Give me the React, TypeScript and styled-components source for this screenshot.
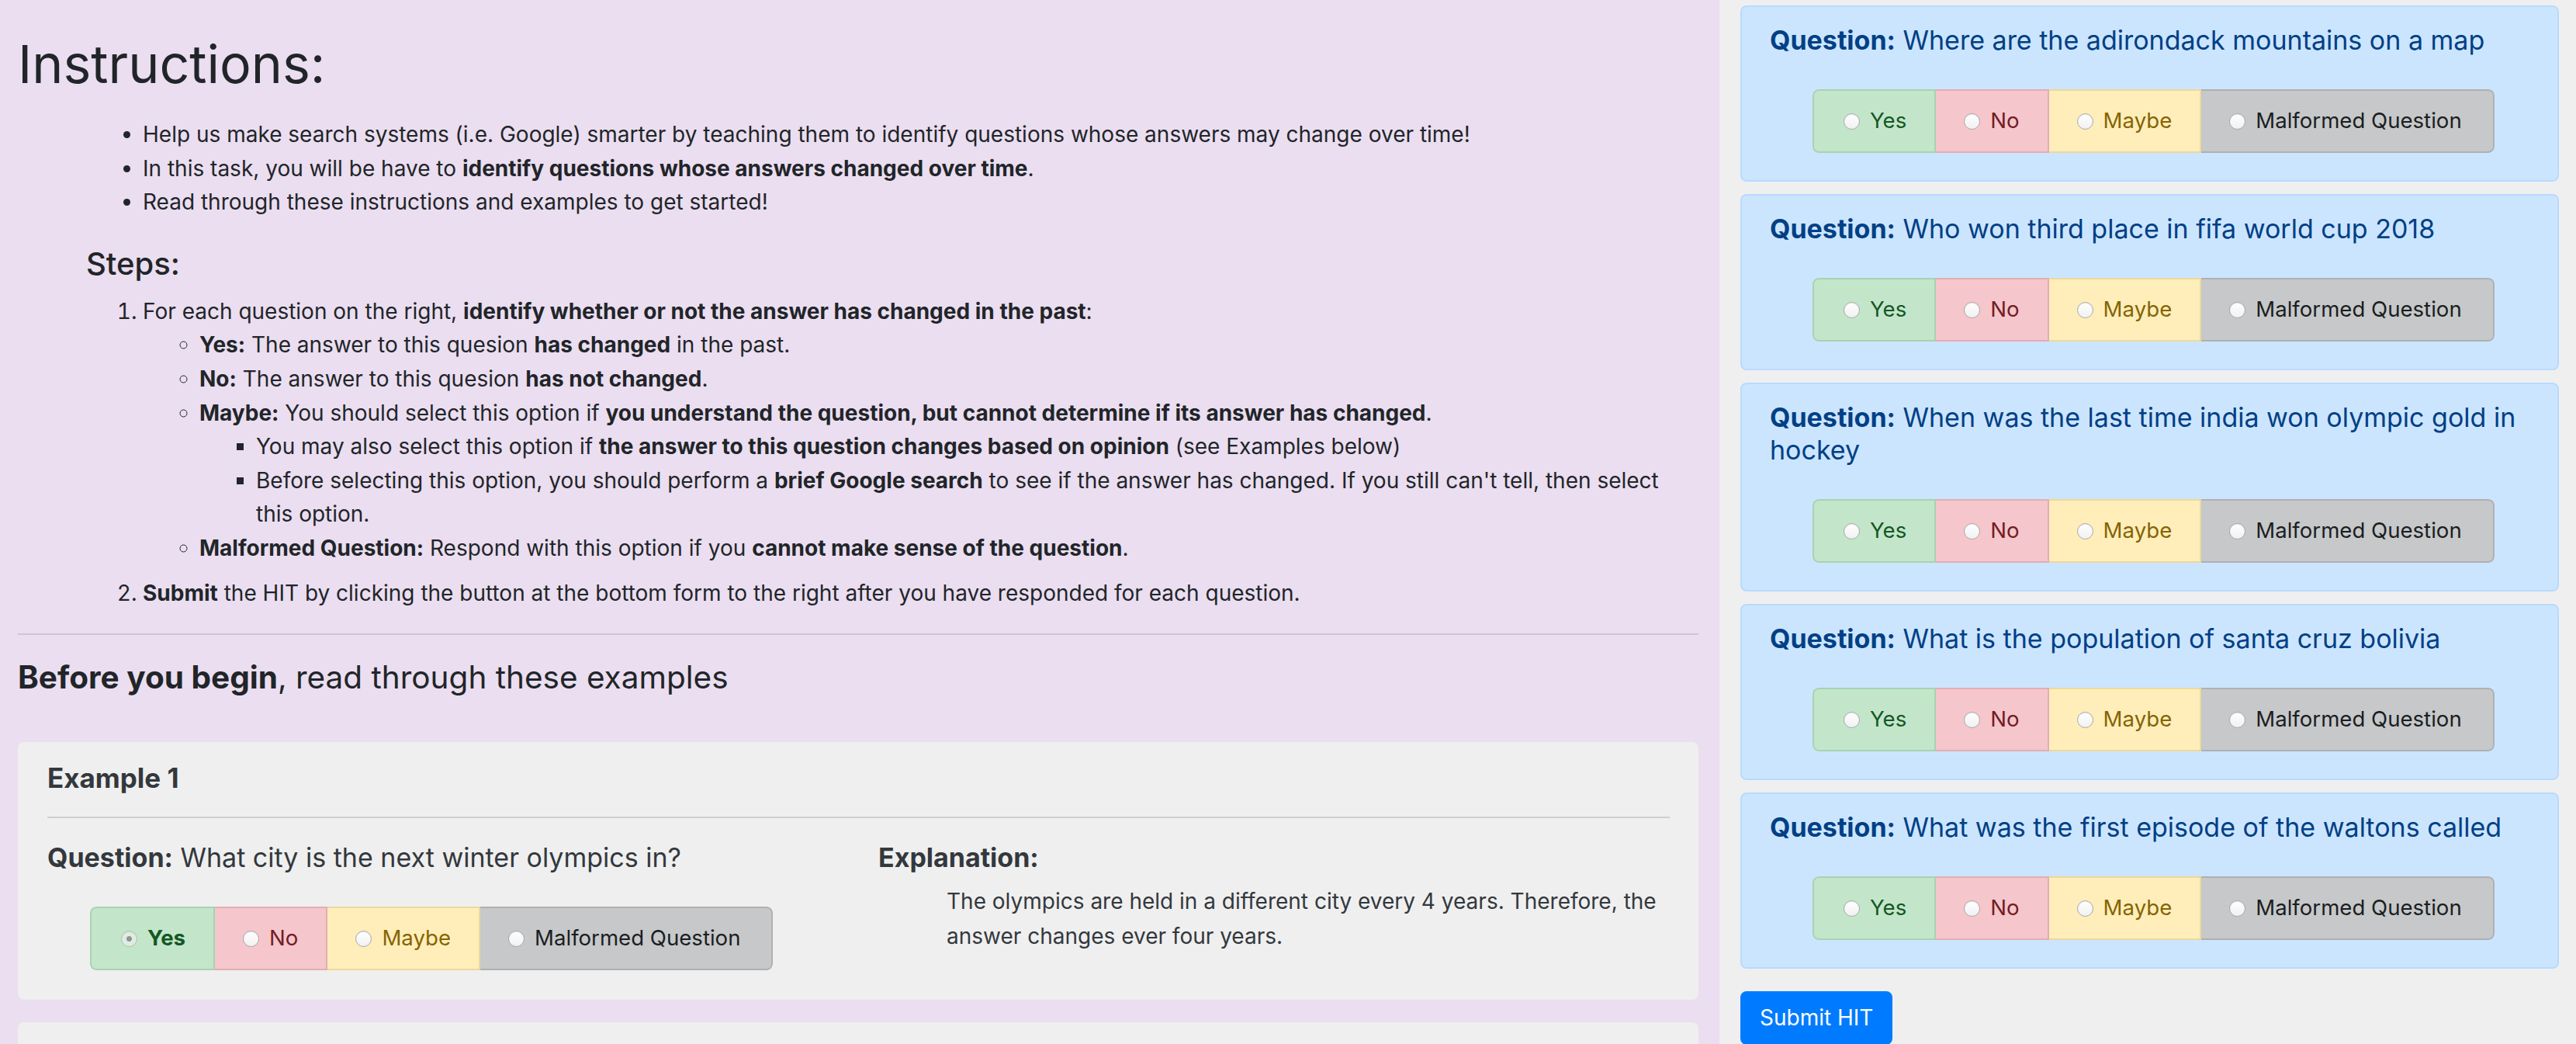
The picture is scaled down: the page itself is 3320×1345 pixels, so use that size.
import React from 'react';
import styled, { createGlobalStyle } from 'styled-components';

const GlobalStyle = createGlobalStyle`
  html, body {
    margin: 0;
    padding: 0;
  }
  body {
    font-family: Inter, "Noto Sans", "Liberation Sans", sans-serif;
    font-size: 28px;
    line-height: 43.6px;
    color: #212529;
    background-color: #efefef;
  }
  * {
    box-sizing: border-box;
  }
`;

const Page = styled.div`
  display: grid;
  grid-template-columns: 2216px 1fr;
  min-height: 100vh;
`;

const LeftCol = styled.div`
  background-color: #ebdef0;
  padding: 39px 27px 0 23px;
`;

const RightCol = styled.div`
  background-color: #efefef;
  padding: 7px 22px 0 27px;
`;

const Title = styled.h1`
  font-size: 68px;
  line-height: 86px;
  font-weight: 400;
  margin: 0 0 27px 0;
`;

const BulletList = styled.ul<{ indent: number; marker: string }>`
  margin: 0;
  padding-left: ${props => props.indent}px;
  list-style-type: ${props => props.marker};
`;

const NumberList = styled.ol`
  margin: 0;
  padding-left: 161px;
`;

const Item = styled.li<{ gap?: number }>`
  margin-bottom: ${props => props.gap || 0}px;
`;

const SubTitle = styled.h4`
  font-size: 40px;
  line-height: 48px;
  font-weight: 500;
  margin: 33px 0 16px 88px;
`;

const Divider = styled.hr`
  border: none;
  border-top: 2px solid #cdc5d2;
  margin: 30px 0 31px 0;
`;

const SectionTitle = styled.h4`
  font-size: 40.5px;
  line-height: 48px;
  font-weight: 400;
  margin: 0 0 59px 0;
`;

const ExampleCard = styled.div`
  background-color: #efefef;
  border-radius: 8px;
  padding: 26px 37px 38px 38px;
  margin-bottom: 29px;
`;

const ExampleTitle = styled.h5`
  font-size: 35px;
  line-height: 41px;
  font-weight: 700;
  color: #33383d;
  margin: 0;
`;

const CardDivider = styled.hr`
  border: none;
  border-top: 2px solid #cfcfcf;
  margin: 29px 0 30px 0;
`;

const ExampleBody = styled.div`
  display: grid;
  grid-template-columns: 1020px 1fr;
  column-gap: 51px;
`;

const QuestionText = styled.h5<{ blue?: boolean }>`
  font-size: 34px;
  line-height: 42px;
  font-weight: 400;
  margin: 0 ${props => (props.blue ? -30 : 0)}px 0 0;
  color: ${props => (props.blue ? '#004085' : '#33383d')};
`;

const ExplanationText = styled.p`
  margin: 13px 0 0 88px;
  line-height: 45px;
  color: #33383d;
  max-width: 945px;
`;

const OptionGroup = styled.div<{ top: number }>`
  display: inline-flex;
  margin: ${props => props.top}px 0 0 55px;
  height: 82px;
  border-radius: 8px;
  overflow: hidden;
  font-size: 27.6px;
`;

const SEGMENTS = {
  yes: { bg: '#c3e6cb', fg: '#155724', border: '#a8d2b1' },
  no: { bg: '#f5c6cb', fg: '#721c24', border: '#e2aeb4' },
  maybe: { bg: '#ffeeba', fg: '#856404', border: '#ecd99c' },
  malformed: { bg: '#c6c8ca', fg: '#1b1e21', border: '#aeb0b2' },
};

type SegmentKind = keyof typeof SEGMENTS;

const Segment = styled.label<{ kind: SegmentKind; first?: boolean; last?: boolean; selected?: boolean }>`
  display: flex;
  align-items: center;
  gap: 13px;
  padding: 0 ${props => (props.last ? 40 : 36)}px 0 ${props => (props.first ? 38 : 36)}px;
  background-color: ${props => SEGMENTS[props.kind].bg};
  color: ${props => SEGMENTS[props.kind].fg};
  border: 2px solid ${props => SEGMENTS[props.kind].border};
  border-left-width: ${props => (props.first ? 2 : 0)}px;
  border-radius: ${props =>
    props.first ? '8px 0 0 8px' : props.last ? '0 8px 8px 0' : '0'};
  font-weight: ${props => (props.selected ? 700 : 400)};
  white-space: nowrap;
`;

const RadioDot = styled.span<{ checked?: boolean }>`
  width: 21px;
  height: 21px;
  border-radius: 50%;
  flex-shrink: 0;
  border: 1px solid ${props => (props.checked ? '#a9b8ad' : '#a8a8a8')};
  background: ${props =>
    props.checked
      ? 'radial-gradient(circle, #7f8c83 0 3px, #e6ece7 4px)'
      : 'linear-gradient(#ffffff, #f1f1f1)'};
  box-shadow: inset 0 1px 1px rgba(0, 0, 0, 0.08);
  opacity: ${props => (props.checked ? 0.85 : 1)};
`;

const QuestionCard = styled.div`
  background-color: #cce5ff;
  border: 2px solid #b8daff;
  border-radius: 8px;
  padding: 22px 36px 35px 36px;
  margin-bottom: 16px;
`;

const SubmitButton = styled.button`
  margin-top: 13px;
  background-color: #007bff;
  color: #ffffff;
  border: 2px solid #007bff;
  border-radius: 8px;
  font-family: inherit;
  font-size: 28px;
  line-height: 43.2px;
  padding: 11px 23px;
`;

const OPTIONS: { kind: SegmentKind; label: string }[] = [
  { kind: 'yes', label: 'Yes' },
  { kind: 'no', label: 'No' },
  { kind: 'maybe', label: 'Maybe' },
  { kind: 'malformed', label: 'Malformed Question' },
];

const QUESTIONS = [
  'Where are the adirondack mountains on a map',
  'Who won third place in fifa world cup 2018',
  'When was the last time india won olympic gold in hockey',
  'What is the population of santa cruz bolivia',
  'What was the first episode of the waltons called',
];

const Options: React.FC<{ top: number; selected?: SegmentKind }> = ({ top, selected }) => (
  <div>
    <OptionGroup top={top}>
      {OPTIONS.map((opt, i) => (
        <Segment
          key={opt.kind}
          kind={opt.kind}
          first={i === 0}
          last={i === OPTIONS.length - 1}
          selected={selected === opt.kind}
        >
          <RadioDot checked={selected === opt.kind} />
          {opt.label}
        </Segment>
      ))}
    </OptionGroup>
  </div>
);

export default function App() {
  return (
    <>
      <GlobalStyle />
      <Page>
        <LeftCol>
          <Title>Instructions:</Title>
          <BulletList indent={161} marker="disc">
            <li>
              Help us make search systems (i.e. Google) smarter by teaching them to identify
              questions whose answers may change over time!
            </li>
            <li>
              In this task, you will be have to <b>identify questions whose answers changed over time</b>.
            </li>
            <li>Read through these instructions and examples to get started!</li>
          </BulletList>

          <SubTitle>Steps:</SubTitle>
          <NumberList>
            <Item gap={14}>
              For each question on the right, <b>identify whether or not the answer has changed in the past</b>:
              <BulletList indent={73} marker="circle">
                <li>
                  <b>Yes:</b> The answer to this quesion <b>has changed</b> in the past.
                </li>
                <li>
                  <b>No:</b> The answer to this quesion <b>has not changed</b>.
                </li>
                <li>
                  <b>Maybe:</b> You should select this option if{' '}
                  <b>you understand the question, but cannot determine if its answer has changed</b>.
                  <BulletList indent={73} marker="square">
                    <li>
                      You may also select this option if{' '}
                      <b>the answer to this question changes based on opinion</b> (see Examples below)
                    </li>
                    <li>
                      Before selecting this option, you should perform a <b>brief Google search</b> to
                      see if the answer has changed. If you still can't tell, then select this option.
                    </li>
                  </BulletList>
                </li>
                <li>
                  <b>Malformed Question:</b> Respond with this option if you{' '}
                  <b>cannot make sense of the question</b>.
                </li>
              </BulletList>
            </Item>
            <Item>
              <b>Submit</b> the HIT by clicking the button at the bottom form to the right after you
              have responded for each question.
            </Item>
          </NumberList>

          <Divider />
          <SectionTitle>
            <b>Before you begin</b>, read through these examples
          </SectionTitle>

          <ExampleCard>
            <ExampleTitle>Example 1</ExampleTitle>
            <CardDivider />
            <ExampleBody>
              <div>
                <QuestionText>
                  <b>Question:</b> What city is the next winter olympics in?
                </QuestionText>
                <Options top={42} selected="yes" />
              </div>
              <div>
                <QuestionText>
                  <b>Explanation:</b>
                </QuestionText>
                <ExplanationText>
                  The olympics are held in a different city every 4 years. Therefore, the answer
                  changes ever four years.
                </ExplanationText>
              </div>
            </ExampleBody>
          </ExampleCard>
          <ExampleCard>
            <ExampleTitle>Example 2</ExampleTitle>
          </ExampleCard>
        </LeftCol>

        <RightCol>
          {QUESTIONS.map(q => (
            <QuestionCard key={q}>
              <QuestionText blue>
                <b>Question:</b> {q}
              </QuestionText>
              <Options top={42} />
            </QuestionCard>
          ))}
          <SubmitButton>Submit HIT</SubmitButton>
        </RightCol>
      </Page>
    </>
  );
}
